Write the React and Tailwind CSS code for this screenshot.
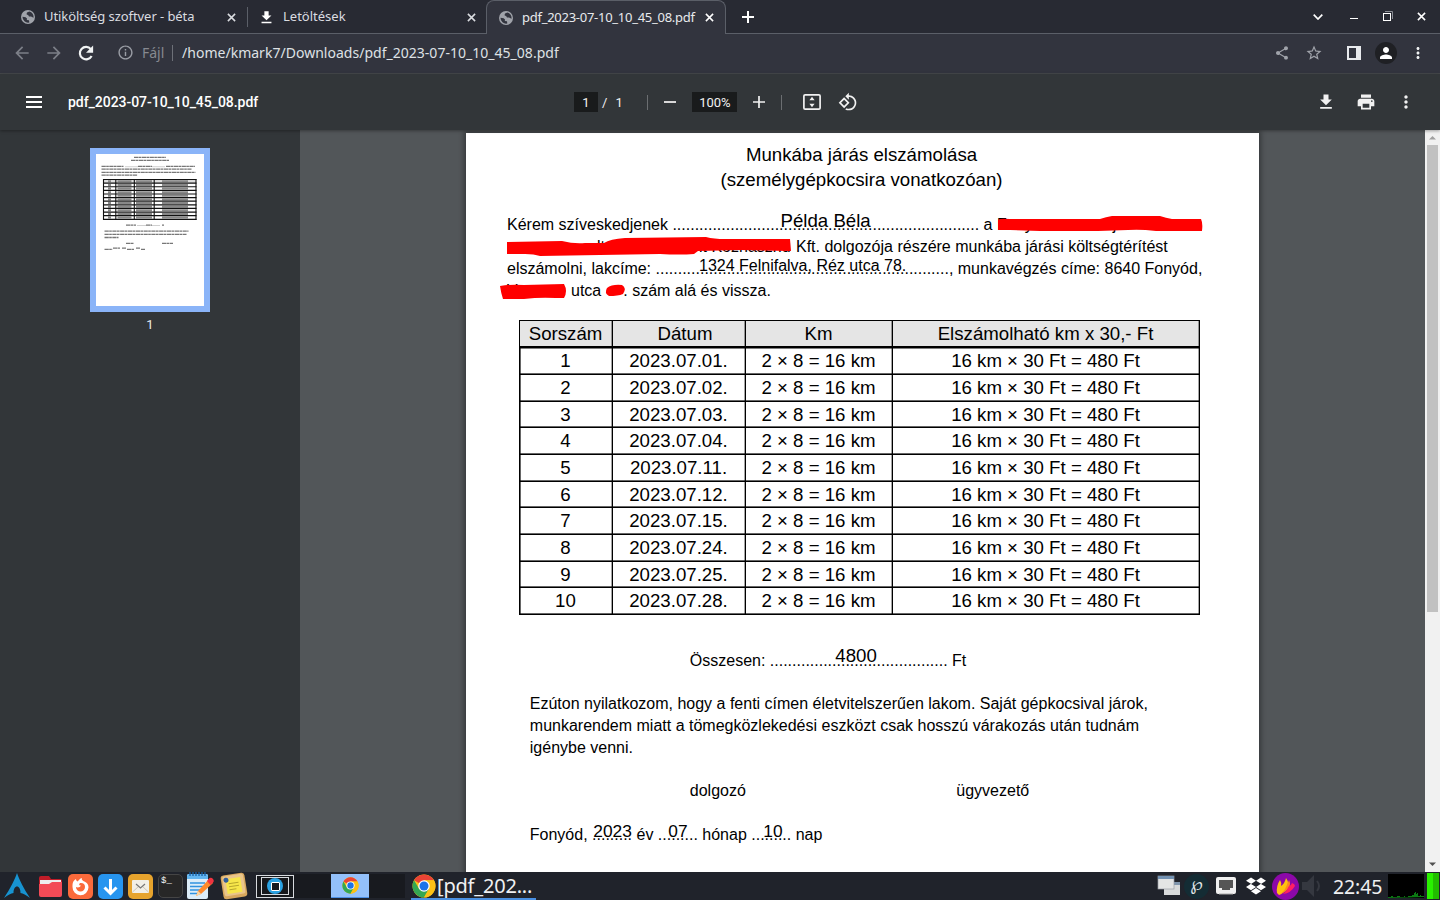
import React from "react";
import {
  MdArrowBack,
  MdArrowForward,
  MdRefresh,
  MdInfoOutline,
  MdShare,
  MdStarBorder,
  MdPerson,
  MdMoreVert,
  MdPrint,
} from "react-icons/md";
import { FaDropbox } from "react-icons/fa";

const DownloadIcon = ({ className }) => (
  <svg viewBox="0 0 24 24" fill="currentColor" className={className}>
    <path d="M19 9h-4V3H9v6H5l7 7 7-7zM5 18v2h14v-2H5z" />
  </svg>
);

const GlobeIcon = ({ className }) => (
  <svg viewBox="0 0 14 14" className={className}>
    <circle cx="7" cy="7" r="7" fill="#a0a3aa" />
    <path d="M8.300 1.500L6 2.500 5.500 4.300 7.300 5.200 8 6.600 10 6.500 12.500 7.800A5.600 5.600 0 0 0 8.300 1.500zM1.500 6.800L4.600 7.200 6 8.600 5.800 10 8 10.300 8.300 12.500A5.600 5.600 0 0 1 1.500 6.800z" fill="#32343e" />
  </svg>
);

const Cross = ({ className }) => (
  <svg viewBox="0 0 10 10" stroke="currentColor" strokeWidth="1.7" className={className}>
    <path d="M1 1l8 8M9 1l-8 8" />
  </svg>
);

const RotateIcon = () => (
  <svg viewBox="0 0 24 24" fill="currentColor" className="size-5">
    <path d="M7.34 6.41L.86 12.9l6.49 6.48 6.49-6.48-6.5-6.49zM3.69 12.9l3.66-3.66L11 12.9l-3.66 3.66-3.65-3.66zm15.67-6.26C17.61 4.88 15.3 4 13 4V.76L8.76 5 13 9.24V6c1.79 0 3.58.68 4.95 2.05 2.73 2.73 2.73 7.17 0 9.9C16.58 19.32 14.79 20 13 20c-.97 0-1.94-.21-2.84-.61l-1.49 1.49C10.02 21.62 11.51 22 13 22c2.3 0 4.61-.88 6.36-2.64 3.52-3.51 3.52-9.21 0-12.72z" />
  </svg>
);

const FitIcon = () => (
  <svg viewBox="0 0 18 16" className="h-4 w-[18px]" fill="none">
    <rect x="0.9" y="0.9" width="16.2" height="14.2" rx="1.2" stroke="currentColor" strokeWidth="1.7" />
    <path d="M9 2.800L11.600 6.200H6.400zM9 13.200L11.600 9.800H6.400z" fill="currentColor" />
  </svg>
);

const ChromeLogo = ({ className }) => (
  <svg viewBox="0 0 48 48" className={className}>
    <circle cx="24" cy="24" r="23" fill="#fbc116" />
    <path d="M24 24L4.1 12.5A23 23 0 0 1 43.9 12.5H24z" fill="#ea4335" />
    <path d="M4.1 12.5A23 23 0 0 0 24 47L34 29.7 24 24l-10 5.7z" fill="#34a853" />
    <path d="M43.9 12.5H24v11.5l10 5.7L24 47A23 23 0 0 0 43.9 12.5z" fill="#fbc116" />
    <circle cx="24" cy="24" r="11.5" fill="#fff" />
    <circle cx="24" cy="24" r="9" fill="#1a73e8" />
  </svg>
);

function TabStrip() {
  return (
    <div className="flex h-[34px] shrink-0 items-stretch bg-[#282a33] text-[13px] text-[#dadce0]">
      <div className="flex w-[486px] items-center border-b border-[#5b5f68] pt-px">
        <GlobeIcon className="ml-[21px] size-[14px] shrink-0" />
        <span className="ml-[9px] w-[176px] whitespace-nowrap tracking-[-0.070px]">Utiköltség szoftver - béta</span>
        <Cross className="ml-[7px] size-[9px]" />
        <div className="ml-[11px] h-5 w-px bg-[#5b5f68]" />
        <DownloadIcon className="ml-[10px] size-[17px] text-white" />
        <span className="ml-2 w-[176px] whitespace-nowrap">Letöltések</span>
        <Cross className="ml-2 size-[9px]" />
      </div>
      <div className="flex w-[240px] items-center rounded-t-lg border border-b-0 border-[#5b5f68] bg-[#32343e]">
        <GlobeIcon className="ml-3 size-[14px] shrink-0" />
        <span className="ml-[9px] w-[175px] whitespace-nowrap tracking-[-0.270px] text-[#e8eaed]">
          pdf_2023-07-10_10_45_08.pdf
        </span>
        <Cross className="ml-[8px] size-[9px] text-white" />
      </div>
      <div className="flex flex-1 items-center border-b border-[#5b5f68] text-white">
        <svg viewBox="0 0 12 12" className="ml-4 size-3" stroke="currentColor" strokeWidth="2">
          <path d="M6 0v12M0 6h12" />
        </svg>
        <svg viewBox="0 0 10 6" className="ml-auto h-[6px] w-[10px]" fill="none" stroke="currentColor" strokeWidth="1.7">
          <path d="M.7.7L5 5 9.300.7" />
        </svg>
        <div className="ml-[27px] mt-[3px] h-px w-2 bg-white" />
        <svg viewBox="0 0 10 10" className="ml-[25px] mb-px size-[10px]" fill="none">
          <path d="M2 .5h7.500V8" stroke="#8a8d95" />
          <rect x=".5" y="2.500" width="7" height="7" stroke="#fff" />
        </svg>
        <Cross className="ml-[24px] mr-[14px] mb-px size-[9px]" />
      </div>
    </div>
  );
}

function AddressBar() {
  return (
    <div className="flex h-10 shrink-0 items-center border-b border-[#45484b] bg-[#32343e] pb-[2px] text-[14px]">
      <MdArrowBack className="ml-3 size-5 text-[#7c7f88]" />
      <MdArrowForward className="ml-3 size-5 text-[#7c7f88]" />
      <svg viewBox="0 0 24 24" className="ml-[13px] size-[18px]" fill="none">
        <path d="M19.500 16A8.300 8.300 0 1 1 18.500 6.800" stroke="#f1f3f4" strokeWidth="2.900" />
        <path d="M21.500 2v9.500H12z" fill="#f1f3f4" />
      </svg>
      <MdInfoOutline className="ml-[22px] size-[17px] text-[#9a9da5]" />
      <span className="ml-2 w-[25px] text-[#868990]">Fájl</span>
      <div className="ml-[5px] h-4 w-px bg-[#6d7078]" />
      <span className="ml-[9px] whitespace-nowrap tracking-[0.020px] text-[#dfe1e5]">
        /home/kmark7/Downloads/pdf_2023-07-10_10_45_08.pdf
      </span>
      <MdShare className="ml-auto size-4 text-[#a0a3aa]" />
      <MdStarBorder className="ml-[15px] size-[18px] text-[#a0a3aa]" />
      <div className="ml-6 h-[14px] w-[14px] border-2 border-r-[5px] border-[#e8eaed]" />
      <div className="ml-[14px] flex size-[22px] items-center justify-center rounded-full bg-[#1f2024]">
        <MdPerson className="size-[18px] text-white" />
      </div>
      <MdMoreVert className="ml-3 mr-[13px] size-[18px] text-[#f1f3f4]" />
    </div>
  );
}

function PdfToolbar() {
  return (
    <div className="relative z-10 flex h-14 shrink-0 items-center bg-[#323639] font-[Roboto,sans-serif] text-[14px] text-[#f1f1f1] shadow-[0_1px_3px_rgba(0,0,0,0.35)]">
      <div className="ml-[26px] flex w-4 flex-col gap-[3px]">
        <div className="h-[2px] bg-white" />
        <div className="h-[2px] bg-white" />
        <div className="h-[2px] bg-white" />
      </div>
      <span className="ml-[26px] w-[506px] font-medium tracking-[-0.040px] text-white">pdf_2023-07-10_10_45_08.pdf</span>
      <div className="flex h-5 w-6 items-center justify-center bg-[#191b1c] pt-px text-[13px]">1</div>
      <span className="ml-1 pt-px text-[13px]">/</span>
      <span className="ml-2 w-2 pt-px text-[13px]">1</span>
      <div className="ml-[24px] h-[15px] w-px bg-[#6b6e71]" />
      <div className="ml-4 h-[2px] w-3 bg-[#d8d8d8]" />
      <div className="ml-4 flex h-5 w-[45px] items-center justify-center bg-[#191b1c] pt-px text-[13px]">100%</div>
      <svg viewBox="0 0 12 12" className="ml-4 size-3" stroke="currentColor" strokeWidth="1.7">
        <path d="M6 0v12M0 6h12" />
      </svg>
      <div className="ml-4 mr-[21px] h-[15px] w-px bg-[#6b6e71]" />
      <FitIcon />
      <div className="ml-[17px]">
        <RotateIcon />
      </div>
      <DownloadIcon className="ml-auto size-5" />
      <MdPrint className="ml-5 size-5" />
      <MdMoreVert className="ml-5 mr-6 size-5" />
    </div>
  );
}

const thumbRows = Array.from({ length: 12 }, (_, i) => 25.5 + i * 3.62);

function Sidebar() {
  return (
    <div className="flex w-[300px] shrink-0 flex-col items-center bg-[#323639] pt-[18px]">
      <div className="h-[164px] w-[120px] border-6 border-[#8ab4f8] bg-white">
        <svg viewBox="0 0 108 152" className="block h-[152px] w-[108px]">
          <g stroke="#777" fill="none" strokeWidth="1.300" strokeDasharray="4.300 .4 2.600 .5">
            <path d="M38 3.400h32M35 6.400h38M5.500 12.300h22M42 12.300h14M70 12.300h29M5.500 15.200h90M5.500 18.300h94M5.500 21.200h36" />
            <path d="M30 71.200h10M50 71.200h6M66 71.200h2M8.500 77.200h84M8.500 80.300h82M8.500 83.500h14M30 89.400h8M66 89.400h11M8.500 95.400h8M17 94.200h7M26 94.200h4M31 95.400h7M40 94.200h4M45 95.400h4" />
          </g>
          <path d="M29 12.700h13M56 12.700h13M41 71.500h9M56 71.500h8" stroke="#bbb" strokeWidth=".7" />
          <rect x="7.500" y="25.500" width="92.500" height="3.600" fill="#ddd" />
          {thumbRows.slice(0, 11).map((y) => (
            <path key={y} d={`M12 ${y + 1.8}h3M21.500 ${y + 1.8}h14M40 ${y + 1.8}h16M66 ${y + 1.8}h26`} stroke="#888" strokeWidth="2" />
          ))}
          {thumbRows.map((y) => (
            <path key={y} d={`M7 ${y}h93.500`} stroke="#111" strokeWidth="1.200" />
          ))}
          <path d="M7.500 25v41M19.800 25v41M38.300 25v41M58.200 25v41M100 25v41" stroke="#111" strokeWidth="1.100" />
        </svg>
      </div>
      <span className="mt-[3px] font-[Roboto,sans-serif] text-[13px] leading-5 text-[#e8eaed]">1</span>
    </div>
  );
}

const Over = ({ className, children }) => (
  <span className={"absolute whitespace-nowrap leading-none " + className}>{children}</span>
);

const entries = ["01", "02", "03", "04", "11", "12", "15", "24", "25", "28"];
const gridCols = "grid h-full grid-cols-[93px_133px_147px_307px]";

function Row({ cells, head }) {
  return (
    <div
      className={
        (head
          ? "h-[27.500px] bg-[#e5e5e5] shadow-[inset_0_-1px_0_#000,0_1px_0_rgba(0,0,0,0.500)] "
          : "h-[26.700px] shadow-[inset_0_-1px_0_rgba(0,0,0,0.600)] ") + "border-b border-black"
      }
    >
      <div className={gridCols}>
        {cells.map((cell, i) => (
          <div
            key={i}
            className="flex items-center justify-center whitespace-nowrap border-r border-black pt-px leading-none shadow-[inset_-1px_0_0_rgba(0,0,0,0.350)]"
          >
            {cell}
          </div>
        ))}
      </div>
    </div>
  );
}

function Page() {
  return (
    <div className="relative ml-[166px] mt-[3px] h-[1122px] w-[793px] shrink-0 bg-white pt-[9px] font-['Liberation_Sans',Arial,sans-serif] text-[16px] text-black shadow-[0_0_5px_2px_rgba(0,0,0,0.350)]">
      <div className="pr-[2px] text-center text-[18.670px] leading-[25px]">
        <div>Munkába járás elszámolása</div>
        <div>(személygépkocsira vonatkozóan)</div>
      </div>

      <div className="relative ml-[41px] mt-[22px] whitespace-nowrap leading-[21.900px]">
        <div>
          Kérem szíveskedjenek {".".repeat(69)} a
          <span className="ml-[4.500px]">F</span>
          <span className="ml-[9px]">ny</span>
          <span className="ml-[80px]">j</span>
        </div>
        <div className="flex">
          <span className="ml-[90px] w-[100px]">lt</span>
          <span className="w-[99px] pl-[2px]">it Közhasznú</span>
          <span>Kft. dolgozója részére munkába járási költségtérítést</span>
        </div>
        <div>elszámolni, lakcíme: {".".repeat(66)}, munkavégzés címe: 8640 Fonyód,</div>
        <div className="flex">
          <span className="w-16">V</span>
          <span>utca</span>
          <span className="ml-[22px]">. szám alá és vissza.</span>
        </div>
        <Over className="left-[273.500px] top-[-2px] text-[18.670px]">Példa Béla</Over>
        <Over className="left-[192px] top-[44px]">1324 Felnifalva, Réz utca 78.</Over>
        <svg viewBox="0 0 710 90" className="absolute -left-[7px] top-[0.600px] h-[90px] w-[710px]" fill="#ff0000">
          <path d="M498 5Q500 3 510 4L600 4Q606 2 612 1L660 1Q666 3 672 4L701 4Q703 8 702 16L656 16Q640 14 628 15L598 16L540 16L510 15L498 15z" />
          <path d="M7 27L62 26Q74 29 85 28L104 28Q110 24 125 23L206 22Q214 24 225 24L290 24L291 36L240 35L198 36L194 39Q180 40 160 39L40 41Q34 39 25 39L7 39z" />
          <path d="M0 71Q10 69 24 70L64 69Q68 76 64 83L56 83Q40 82 24 84L3 84Q1 78 0 71z" />
          <path d="M107 73Q112 69 122 70Q127 73 123 79Q118 81 109 81Q104 78 107 73z" />
        </svg>
      </div>

      <div className="ml-[52.500px] mt-[18px] w-[681px] border-l border-t border-black text-[18.670px] shadow-[inset_1px_1px_0_rgba(0,0,0,0.600)]">
        <Row head cells={["Sorszám", <span className="pl-[13px]">Dátum</span>, "Km", "Elszámolható km x 30,- Ft"]} />
        {entries.map((d, i) => (
          <Row
            key={d}
            cells={[String(i + 1), `2023.07.${d}.`, "2 × 8 = 16 km", "16 km × 30 Ft = 480 Ft"]}
          />
        ))}
      </div>

      <div className="relative ml-[223.800px] mt-[34.600px] whitespace-nowrap leading-[22px]">
        Összesen: {".".repeat(40)} Ft
        <Over className="left-[145.500px] top-[-3px] text-[18.670px]">4800</Over>
      </div>

      <div className="ml-[63.800px] mt-[21px] whitespace-nowrap leading-[22px]">
        <div>Ezúton nyilatkozom, hogy a fenti címen életvitelszerűen lakom. Saját gépkocsival járok,</div>
        <div>munkarendem miatt a tömegközlekedési eszközt csak hosszú várakozás után tudnám</div>
        <div>igénybe venni.</div>
      </div>

      <div className="ml-[223.800px] mt-[21px] flex leading-[22px]">
        <span className="w-[266.500px]">dolgozó</span>
        <span>ügyvezető</span>
      </div>

      <div className="relative ml-[63.800px] mt-[22px] whitespace-nowrap leading-[22px]">
        Fonyód, ......... év ......... hónap ......... nap
        <Over className="left-[63.500px] top-[-1px] text-[17.330px]">2023</Over>
        <Over className="left-[138.500px] top-[-1px] text-[17.330px]">07</Over>
        <Over className="left-[233.500px] top-[-1px] text-[17.330px]">10</Over>
      </div>
    </div>
  );
}

function Scrollbar() {
  return (
    <div className="ml-auto flex w-[15px] shrink-0 flex-col items-center bg-[#f1f1f1]">
      <svg viewBox="0 0 15 15" className="size-[15px]">
        <path d="M4 9.500L7.500 6 11 9.500z" fill="#a0a0a0" />
      </svg>
      <div className="h-[467px] w-[11px] bg-[#c1c1c1]" />
      <svg viewBox="0 0 15 15" className="mt-auto size-[15px]">
        <path d="M4 5.500L7.500 9 11 5.500z" fill="#505050" />
      </svg>
    </div>
  );
}

function Taskbar() {
  return (
    <div className="relative z-20 flex h-7 shrink-0 items-center bg-[#20232b]">
      <svg viewBox="0 0 26 26" className="ml-1 size-[26px]" fill="#1793d1">
        <path d="M13 0C11 6 6 16 0 25c4-3 7-4.500 9.500-5 0-4 1.500-6.500 3.500-6.500s3.500 2.500 3.500 6.500c2.500.5 5.500 2 9.500 5C20 16 15 6 13 0z" />
      </svg>
      <svg viewBox="0 0 25 23" className="ml-2 h-[23px] w-[25px]">
        <path d="M1 3q0-2 2-2h8l2 3h9q2 0 2 2v5H1z" fill="#c01c28" />
        <path d="M2 5h21v4H2z" fill="#eee" />
        <path d="M1 9h10l3-2h10v13q0 2-2 2H3q-2 0-2-2z" fill="#f34b57" />
      </svg>
      <svg viewBox="0 0 25 25" className="ml-[5px] size-[25px]">
        <rect width="25" height="25" rx="5" fill="#fb6a3b" />
        <path d="M4.500 11c0-3 1.500-5 3.500-6 0 1.300.6 2 1.500 2.600C11 6 11.700 4.600 14 4c-.7 1.300 0 2 1.300 3 3 1 5.200 3 5.200 6.300A8 8 0 0 1 4.500 13z" fill="#fff" />
        <path d="M12 9q5-.5 5 4a4.500 4.500 0 0 1-9 0c2 1 4 .3 5-1.500-2 .4-2.500-1-1-2.500z" fill="#fb6a3b" />
      </svg>
      <svg viewBox="0 0 25 25" className="ml-[5px] size-[25px]">
        <rect width="25" height="25" rx="5" fill="#2795ef" />
        <path d="M12.500 5v14M6.500 13.500l6 6 6-6" fill="none" stroke="#fff" strokeWidth="3" />
      </svg>
      <svg viewBox="0 0 25 25" className="ml-[5px] size-[25px]">
        <rect width="25" height="25" rx="5" fill="#e6a32d" />
        <rect x="4" y="6" width="17" height="13" rx="1" fill="#f2efe7" />
        <path d="M4.500 18l6-5.500M20.500 18l-6-5.500" fill="none" stroke="#ccc6b8" />
        <path d="M8 10l4.500 4L17 10" fill="none" stroke="#777" strokeWidth="1.200" />
      </svg>
      <div className="ml-[5px] h-6 w-[25px] rounded-[5px] border border-[#454545] bg-[#272727] pl-[2px] pt-[2px] font-['Liberation_Mono',monospace] text-[9px] leading-none text-white">
        $_
      </div>
      <svg viewBox="0 0 28 28" className="ml-[3px] size-7">
        <rect x="1" y="2" width="21" height="25" rx="2" fill="#dcecf8" />
        <path d="M1 4q0-2 2-2h17q2 0 2 2v3H1z" fill="#62b5f0" />
        <path d="M4 0v4M7 0v4M10 0v4M13 0v4M16 0v4M19 0v4" stroke="#1660a5" strokeWidth="1.300" />
        <path d="M4 11h15M4 14.500h13M4 18h10M4 21.500h7" stroke="#3192df" strokeWidth="1.500" />
        <path d="M10 24l2-5L23 7l4 4-12 11z" fill="#ff8a2b" />
        <path d="M21 9l2.500-3q2-1 3.500 1t0 3.500L24.500 13z" fill="#ef3340" />
        <path d="M10 24l2-5 3.200 3z" fill="#f7d6a7" />
      </svg>
      <svg viewBox="0 0 28 28" className="ml-[6px] size-7">
        <g transform="rotate(-9 14 14)">
          <rect x="2" y="2" width="24" height="24" rx="3" fill="#d8a85e" />
          <rect x="3.500" y="3" width="21" height="20" rx="2" fill="#e9c58b" />
          <rect x="6.500" y="6" width="15" height="15" fill="#f7e64a" />
          <path d="M9 11h10M9 14h10M9 17h7" stroke="#b8a72c" />
          <circle cx="7" cy="7" r="2.500" fill="#315e9c" />
        </g>
      </svg>

      <div className="ml-2 flex h-[23px] w-[38px] items-center justify-center border border-[#d7dade] bg-[#16181c]">
        <div className="flex h-[18px] w-[28px] items-center justify-center border border-[#d7dade]">
          <div className="flex size-4 items-center justify-center rounded-full bg-[#2aa2e3]">
            <div className="size-[9px] rounded-[1px] border border-white bg-[#17191e]" />
          </div>
        </div>
      </div>
      <div className="h-6 w-[37px] bg-[#181a1f]" />
      <div className="flex h-6 w-[38px] items-center justify-center border-b border-[#4c8fe4] bg-[#93c0fa]">
        <ChromeLogo className="size-[17px]" />
      </div>
      <div className="h-6 w-9 bg-[#181a1f]" />
      <div className="ml-[6px] flex h-7 w-[125px] items-center border-b-2 border-[#4a90e2] pt-px text-[20px] text-[#f0f1f3]">
        <ChromeLogo className="ml-px size-6 shrink-0" />
        <span className="ml-px whitespace-nowrap pt-px leading-none tracking-[-0.200px]">[pdf_202...</span>
      </div>

      <svg viewBox="0 0 24 22" className="ml-auto h-[22px] w-6">
        <rect x="7" y="7" width="16" height="13" fill="#d8dadb" />
        <path d="M7 7h16v3H7z" fill="#7f95ad" />
        <rect x="1" y="1" width="16" height="13" fill="#e4e5e5" stroke="#9a9fa5" strokeWidth=".7" />
        <path d="M1 1h16v3H1z" fill="#7392b3" />
      </svg>
      <div className="ml-[3px] flex size-[25px] items-center justify-center rounded-full bg-[#142c34] pb-1 font-['DejaVu_Sans',sans-serif] text-[18px] italic leading-none text-[#e2e6e8]">
        ℘
      </div>
      <svg viewBox="0 0 20 18" className="ml-[7px] h-[18px] w-5">
        <rect width="20" height="17" rx="2" fill="#f0f0f0" />
        <path d="M3 3h14v8l-3 0v2H6v-2H3z" fill="#555" />
        <path d="M3 17h14" stroke="#aaa" />
      </svg>
      <FaDropbox className="ml-[10px] size-5 text-white" />
      <svg viewBox="0 0 27 27" className="ml-[6px] size-[27px]">
        <circle cx="13.500" cy="13.500" r="13.500" fill="#8c08a8" />
        <path d="M5 20Q4 13 8 7q2 3 1 6 4-3 5-8 4 5 0 11-3 5-7 6z" fill="#ffc20e" />
        <path d="M8 21q4-2 6-7 2-4 3-7 2 4 0 7-2 5-9 7z" fill="#ff8a1d" />
        <path d="M11 21q4-3 6-8 2 0 3-3 3 1 3 3-4 7-12 8z" fill="#ff1f63" />
      </svg>
      <svg viewBox="0 0 20 24" className="ml-[3px] h-6 w-5">
        <path d="M0 8h5l7-7v22l-7-7H0z" fill="#353840" />
        <path d="M15 7q4 5 0 10" fill="none" stroke="#353840" strokeWidth="2" />
      </svg>
      <span className="ml-[11px] w-[50px] whitespace-nowrap pt-px text-[19.500px] leading-none tracking-[-0.100px] text-[#eff0f1]">22:45</span>
      <svg viewBox="0 0 36 24" className="ml-[5px] h-6 w-9 bg-black">
        <path d="M0 24v-1h3v-1h2v1h4v-1h3v1h4v-1h1v1h3v-1h4v-1h2v-2h1v-1h1v2h1v-1h1v3h2v-1h1v1h3v1z" fill="#0b7a13" />
      </svg>
      <div className="ml-[3px] mr-px flex h-[26px] w-3">
        <div className="w-[6px] bg-[#29f000]" />
        <div className="w-[6px] bg-[#22bd00]" />
      </div>
    </div>
  );
}

export default function App() {
  return (
    <div className="flex h-[900px] w-[1440px] flex-col overflow-hidden font-['Noto_Sans',sans-serif]">
      <TabStrip />
      <AddressBar />
      <PdfToolbar />
      <div className="flex h-[742px] shrink-0 overflow-hidden bg-[#525659]">
        <Sidebar />
        <Page />
        <Scrollbar />
      </div>
      <Taskbar />
    </div>
  );
}
